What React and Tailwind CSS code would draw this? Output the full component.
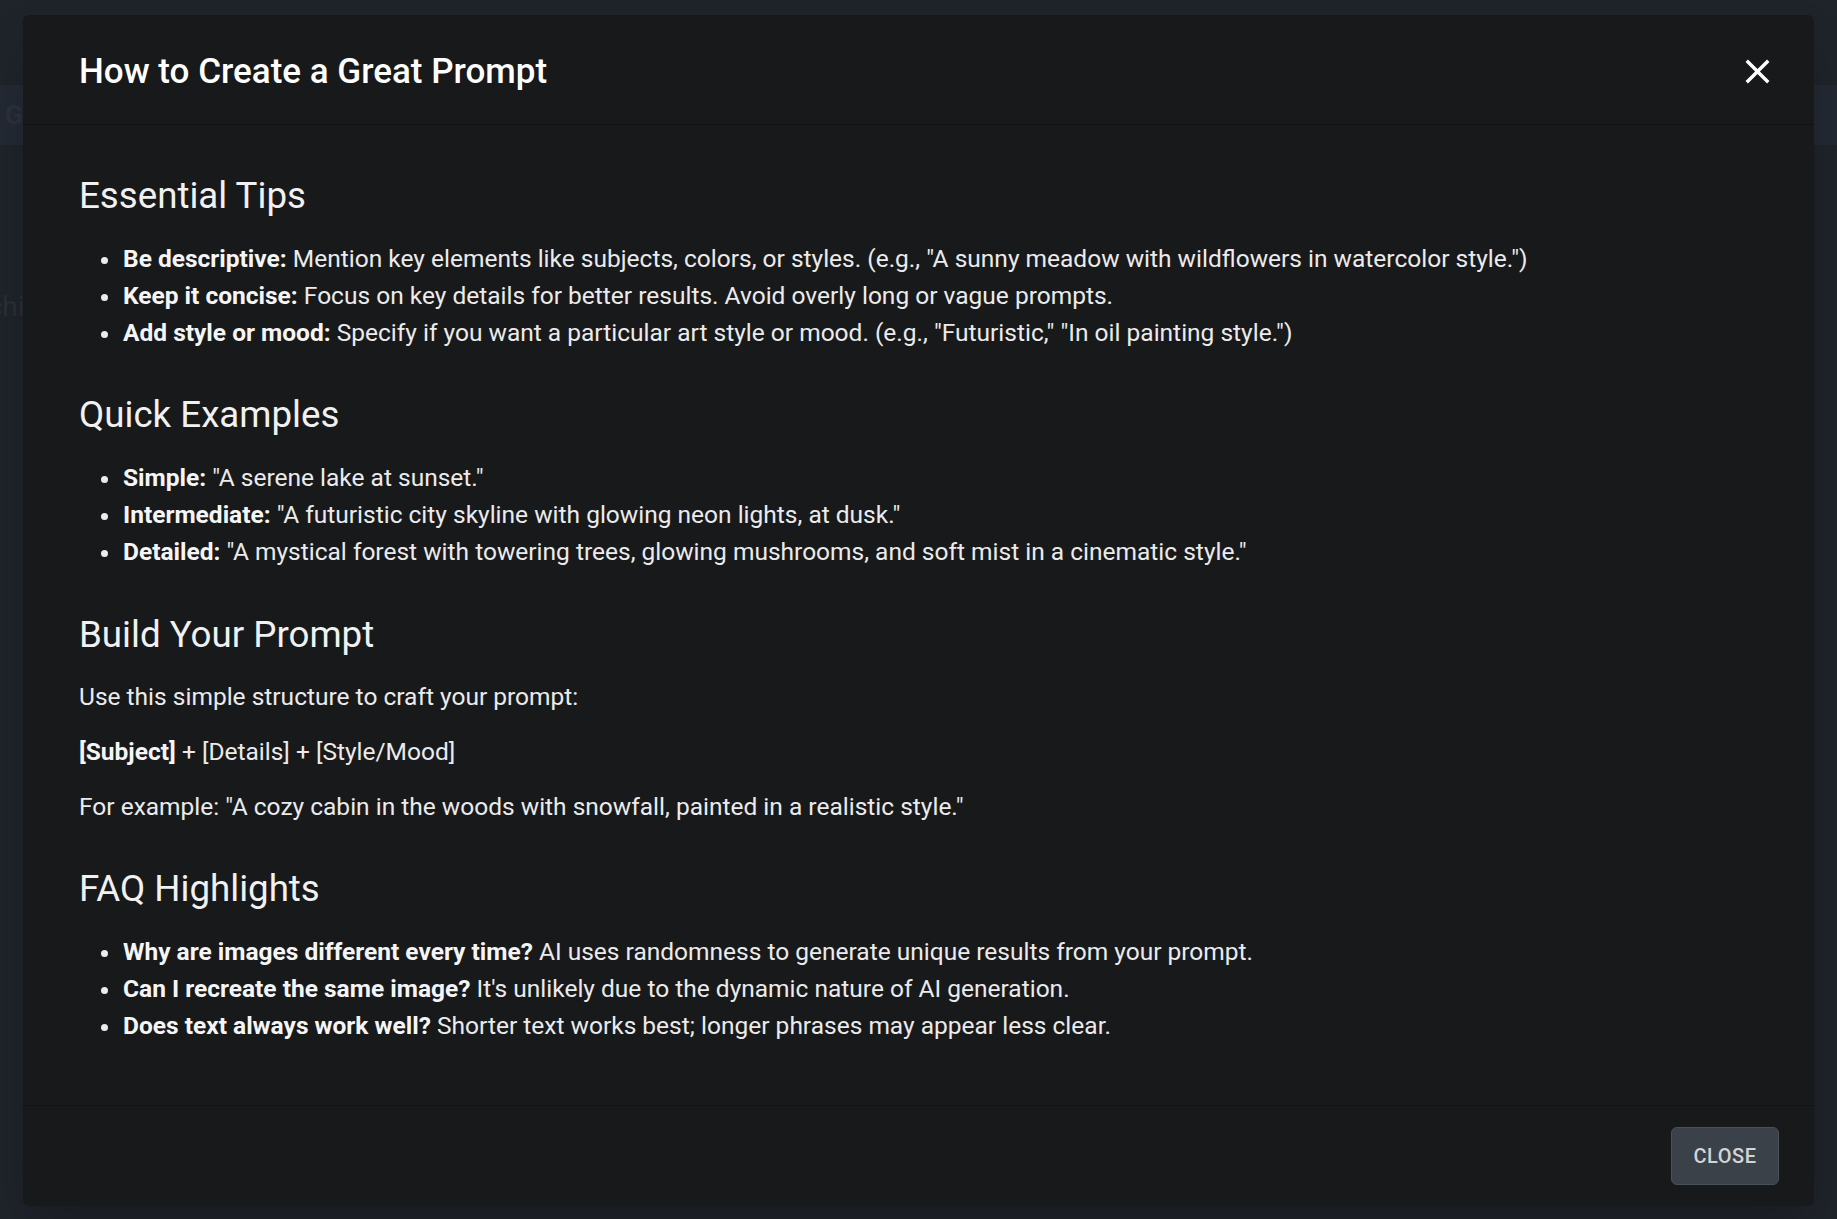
import React from 'react';

const tips = [
  ['Be descriptive:', 'Mention key elements like subjects, colors, or styles. (e.g., "A sunny meadow with wildflowers in watercolor style.")'],
  ['Keep it concise:', 'Focus on key details for better results. Avoid overly long or vague prompts.'],
  ['Add style or mood:', 'Specify if you want a particular art style or mood. (e.g., "Futuristic," "In oil painting style.")'],
];

const examples = [
  ['Simple:', '"A serene lake at sunset."'],
  ['Intermediate:', '"A futuristic city skyline with glowing neon lights, at dusk."'],
  ['Detailed:', '"A mystical forest with towering trees, glowing mushrooms, and soft mist in a cinematic style."'],
];

const faqs = [
  ['Why are images different every time?', 'AI uses randomness to generate unique results from your prompt.'],
  ['Can I recreate the same image?', "It's unlikely due to the dynamic nature of AI generation."],
  ['Does text always work well?', 'Shorter text works best; longer phrases may appear less clear.'],
];

function Heading({ children }) {
  return <h2 className="text-[36.7px] leading-[48px] font-normal text-[#f1f1f1] mb-[20px]">{children}</h2>;
}

function BulletList({ items }) {
  return (
    <ul className="pl-[22px]">
      {items.map(([label, text]) => (
        <li key={label} className="flex text-[24.5px] leading-[37px] whitespace-nowrap">
          <span className="shrink-0 w-[7px] h-[7px] rounded-full bg-[#ececec] mt-[17px] mr-[15px]" />
          <span>
            <strong className="font-bold text-[#f5f5f5]">{label}</strong> {text}
          </span>
        </li>
      ))}
    </ul>
  );
}

export default function App() {
  return (
    <div className="relative w-full h-[1219px] overflow-hidden bg-[#1f232a]" style={{ fontFamily: 'Roboto, "Liberation Sans", sans-serif' }}>
      {/* page behind the backdrop */}
      <div className="flex flex-col pt-[85px]">
        <div className="h-[60px] bg-[#232934] flex items-center pl-[5px] text-[26px] font-bold text-[#2b313b]">Gl</div>
        <div className="h-[147px]" />
        <div className="-ml-[52px] text-[28px] leading-[30px] text-[#2a2f38]">Machin</div>
      </div>

      {/* dialog */}
      <div className="absolute left-[23px] top-[15px] w-[1791px] h-[1191px] rounded-[6px] bg-[#18191b] flex flex-col shadow-2xl text-[#ebebeb]">
        <div className="h-[110px] shrink-0 flex items-center justify-between pl-[56px] pr-[36px] border-b border-[#121315]">
          <h1 className="text-[35px] font-medium text-white pt-[6px]">How to Create a Great Prompt</h1>
          <svg width="41" height="41" viewBox="0 0 24 24" fill="#ffffff" className="mt-[3px]">
            <path d="M19 6.41 17.59 5 12 10.59 6.41 5 5 6.41 10.59 12 5 17.59 6.41 19 12 13.41 17.59 19 19 17.59 13.41 12z" />
          </svg>
        </div>

        <div className="flex-1 flex flex-col gap-[40px] pl-[56px] pr-[57px] pt-[47px]">
          <section>
            <Heading>Essential Tips</Heading>
            <BulletList items={tips} />
          </section>
          <section>
            <Heading>Quick Examples</Heading>
            <BulletList items={examples} />
          </section>
          <section className="pt-[1px]">
            <Heading>Build Your Prompt</Heading>
            <div className="flex flex-col gap-[19px] text-[24.5px] leading-[36px]">
              <p>Use this simple structure to craft your prompt:</p>
              <p>
                <strong className="font-bold text-[#f5f5f5]">[Subject]</strong> + [Details] + [Style/Mood]
              </p>
              <p>For example: "A cozy cabin in the woods with snowfall, painted in a realistic style."</p>
            </div>
          </section>
          <section>
            <Heading>FAQ Highlights</Heading>
            <BulletList items={faqs} />
          </section>
        </div>

        <div className="h-[101px] shrink-0 border-t border-[#121315] flex items-center justify-end pr-[35px]">
          <button className="w-[108px] h-[58px] rounded-[6px] bg-[#3a4148] border border-[#4a5158] text-[20px] font-medium tracking-[0.5px] text-[#d2d4d7]">
            CLOSE
          </button>
        </div>
      </div>
    </div>
  );
}
